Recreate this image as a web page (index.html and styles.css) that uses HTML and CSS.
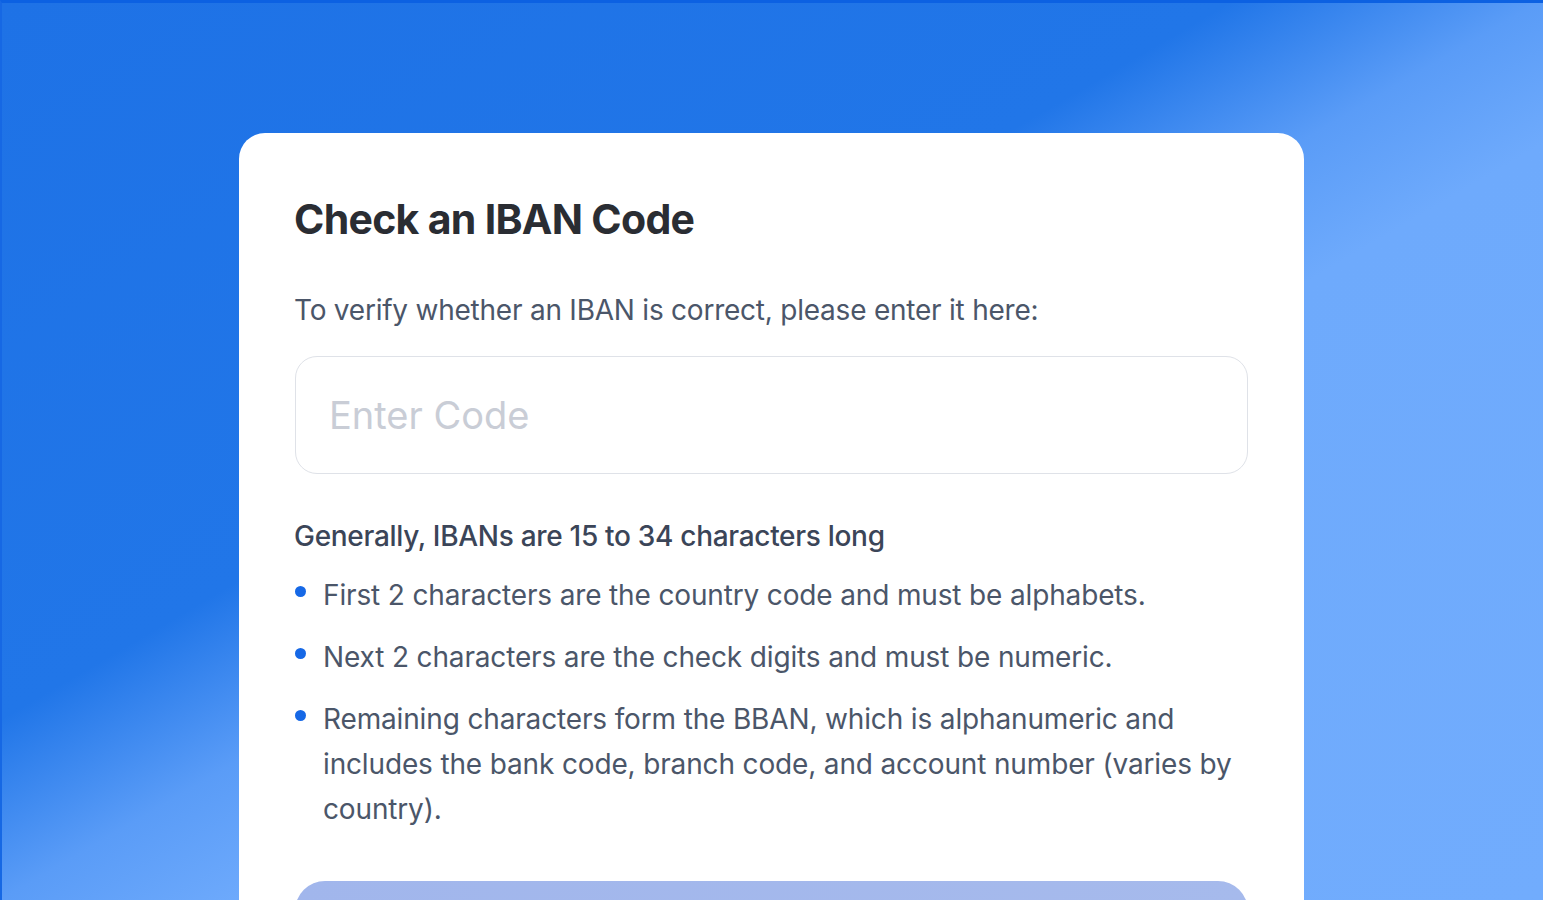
FILE: index.html
```html
<!DOCTYPE html>
<html lang="en">
<head>
  <meta charset="UTF-8" />
  <title>Check an IBAN Code</title>
  <link rel="stylesheet" href="styles.css">
</head>
<body>
  <main class="page">
    <section class="card">
      <h1>Check an IBAN Code</h1>
      <p class="intro">To verify whether an IBAN is correct, please enter it here:</p>
      <input type="text" class="code-input" placeholder="Enter Code">

      <h2>Generally, IBANs are 15 to 34 characters long</h2>
      <ul class="rules">
        <li>First 2 characters are the country code and must be alphabets.</li>
        <li>Next 2 characters are the check digits and must be numeric.</li>
        <li>Remaining characters form the BBAN, which is alphanumeric and includes the bank code, branch code, and account number (varies by country).</li>
      </ul>

      <button type="button" class="check-btn">Check IBAN</button>
    </section>
  </main>
</body>
</html>
```

FILE: styles.css
```css
html, body {
  margin: 0;
  height: 900px;
  overflow: hidden;
}
body {
  font-family: Inter, 'Noto Sans', sans-serif;
  background: linear-gradient(to bottom right, #1e72e6 0%, #2176e8 40%, #5a9cf7 50%, #6eaafc 58%, #71acfd 100%);
  border-top: 3px solid #0c61e2;
  border-left: 2px solid #1668e4;
  box-sizing: border-box;
}
.page {
  display: flex;
  justify-content: center;
  padding-top: 130px;
}
.card {
  width: 1065px;
  box-sizing: border-box;
  background: #fff;
  border-radius: 26px;
  padding: 58px 56px 40px 55px;
  margin-left: -2px;
}
h1 {
  margin: 0;
  font-size: 41px;
  font-weight: 700;
  color: #2a2d33;
  letter-spacing: -0.7px;
  line-height: 56px;
}
.intro {
  margin: 43px 0 0;
  font-size: 28px;
  line-height: 40px;
  color: #4b5669;
  letter-spacing: -0.23px;
}
.code-input {
  display: block;
  width: 953px;
  height: 118px;
  box-sizing: border-box;
  margin-top: 26px;
  margin-left: 1px;
  padding: 0 33px;
  border: 1.5px solid #dfe2e8;
  border-radius: 22px;
  font-family: inherit;
  font-size: 38px;
  color: #2a2d33;
  background: #fff;
  outline: none;
}
.code-input::placeholder {
  color: #c9cdd6;
  letter-spacing: 0;
}
h2 {
  margin: 42px 0 0;
  font-size: 28px;
  font-weight: 500;
  line-height: 40px;
  color: #3b4558;
  letter-spacing: -0.3px;
}
.rules {
  list-style: none;
  margin: 17px 0 0;
  padding: 0;
}
.rules li {
  position: relative;
  padding-left: 29px;
  margin-bottom: 17px;
  font-size: 28px;
  line-height: 45px;
  color: #4b5669;
  letter-spacing: -0.15px;
}
.rules li::before {
  content: "";
  position: absolute;
  left: 1px;
  top: 13px;
  width: 11px;
  height: 11px;
  border-radius: 50%;
  background: #1668e6;
}
.check-btn {
  display: block;
  width: 953px;
  height: 100px;
  margin: 49px 0 0 1px;
  border: none;
  border-radius: 30px;
  background: linear-gradient(to right, #a1b6ec, #a6baec);
  color: #fff;
  font-family: inherit;
  font-size: 30px;
  font-weight: 600;
}
```
